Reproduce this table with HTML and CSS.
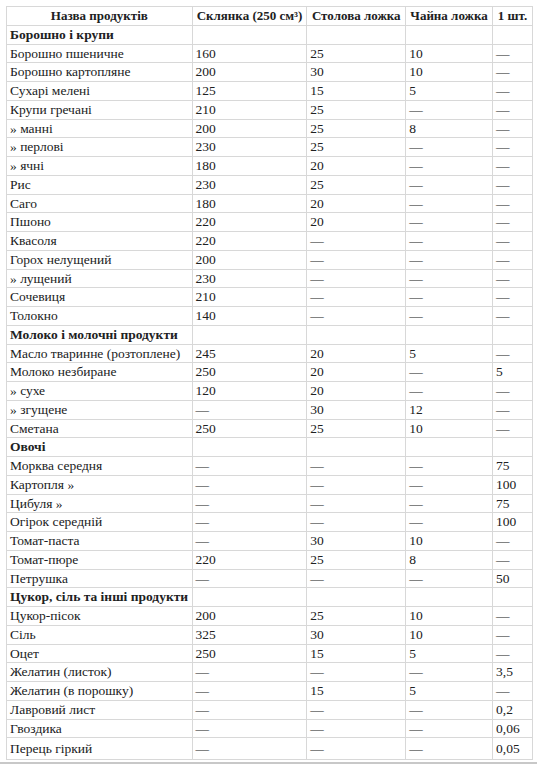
FILE: index.html
```html
<!DOCTYPE html>
<html lang="uk">
<head>
  <meta charset="UTF-8">
  <meta name="viewport" content="width=device-width, initial-scale=1.0">
  <title>Маса продуктів</title>
  <link rel="stylesheet" href="styles.css">
</head>
<body>
  <div class="page">
    <table class="measures">
      <colgroup>
        <col class="col-name">
        <col class="col-glass">
        <col class="col-spoon">
        <col class="col-tea">
        <col class="col-piece">
      </colgroup>
      <thead>
        <tr>
          <th>Назва продуктів</th>
          <th>Склянка (250 см³)</th>
          <th>Столова ложка</th>
          <th>Чайна ложка</th>
          <th>1 шт.</th>
        </tr>
      </thead>
      <tbody>
        <tr class="section"><td>Борошно і крупи</td><td></td><td></td><td></td><td></td></tr>
        <tr><td>Борошно пшеничне</td><td>160</td><td>25</td><td>10</td><td>—</td></tr>
        <tr><td>Борошно картопляне</td><td>200</td><td>30</td><td>10</td><td>—</td></tr>
        <tr><td>Сухарі мелені</td><td>125</td><td>15</td><td>5</td><td>—</td></tr>
        <tr><td>Крупи гречані</td><td>210</td><td>25</td><td>—</td><td>—</td></tr>
        <tr><td>» манні</td><td>200</td><td>25</td><td>8</td><td>—</td></tr>
        <tr><td>» перлові</td><td>230</td><td>25</td><td>—</td><td>—</td></tr>
        <tr><td>» ячні</td><td>180</td><td>20</td><td>—</td><td>—</td></tr>
        <tr><td>Рис</td><td>230</td><td>25</td><td>—</td><td>—</td></tr>
        <tr><td>Саго</td><td>180</td><td>20</td><td>—</td><td>—</td></tr>
        <tr><td>Пшоно</td><td>220</td><td>20</td><td>—</td><td>—</td></tr>
        <tr><td>Квасоля</td><td>220</td><td>—</td><td>—</td><td>—</td></tr>
        <tr><td>Горох нелущений</td><td>200</td><td>—</td><td>—</td><td>—</td></tr>
        <tr><td>» лущений</td><td>230</td><td>—</td><td>—</td><td>—</td></tr>
        <tr><td>Сочевиця</td><td>210</td><td>—</td><td>—</td><td>—</td></tr>
        <tr><td>Толокно</td><td>140</td><td>—</td><td>—</td><td>—</td></tr>

        <tr class="section"><td>Молоко і молочні продукти</td><td></td><td></td><td></td><td></td></tr>
        <tr><td>Масло тваринне (розтоплене)</td><td>245</td><td>20</td><td>5</td><td>—</td></tr>
        <tr><td>Молоко незбиране</td><td>250</td><td>20</td><td>—</td><td>5</td></tr>
        <tr><td>» сухе</td><td>120</td><td>20</td><td>—</td><td>—</td></tr>
        <tr><td>» згущене</td><td>—</td><td>30</td><td>12</td><td>—</td></tr>
        <tr><td>Сметана</td><td>250</td><td>25</td><td>10</td><td>—</td></tr>

        <tr class="section"><td>Овочі</td><td></td><td></td><td></td><td></td></tr>
        <tr><td>Морква середня</td><td>—</td><td>—</td><td>—</td><td>75</td></tr>
        <tr><td>Картопля »</td><td>—</td><td>—</td><td>—</td><td>100</td></tr>
        <tr><td>Цибуля »</td><td>—</td><td>—</td><td>—</td><td>75</td></tr>
        <tr><td>Огірок середній</td><td>—</td><td>—</td><td>—</td><td>100</td></tr>
        <tr><td>Томат-паста</td><td>—</td><td>30</td><td>10</td><td>—</td></tr>
        <tr><td>Томат-пюре</td><td>220</td><td>25</td><td>8</td><td>—</td></tr>
        <tr><td>Петрушка</td><td>—</td><td>—</td><td>—</td><td>50</td></tr>

        <tr class="section"><td>Цукор, сіль та інші продукти</td><td></td><td></td><td></td><td></td></tr>
        <tr><td>Цукор-пісок</td><td>200</td><td>25</td><td>10</td><td>—</td></tr>
        <tr><td>Сіль</td><td>325</td><td>30</td><td>10</td><td>—</td></tr>
        <tr><td>Оцет</td><td>250</td><td>15</td><td>5</td><td>—</td></tr>
        <tr><td>Желатин (листок)</td><td>—</td><td>—</td><td>—</td><td>3,5</td></tr>
        <tr><td>Желатин (в порошку)</td><td>—</td><td>15</td><td>5</td><td>—</td></tr>
        <tr><td>Лавровий лист</td><td>—</td><td>—</td><td>—</td><td>0,2</td></tr>
        <tr><td>Гвоздика</td><td>—</td><td>—</td><td>—</td><td>0,06</td></tr>
        <tr class="last"><td>Перець гіркий</td><td>—</td><td>—</td><td>—</td><td>0,05</td></tr>
      </tbody>
    </table>
  </div>
</body>
</html>
```

FILE: styles.css
```css
/* General Styling */
body {
  margin: 0;
  padding: 0;
  background-color: #fff;
  font-family: "Liberation Serif", "DejaVu Serif", serif;
  color: #202122;
}

.page {
  padding: 6px 4px 2px 6px;
  border-bottom: 2px solid #c8c8c8;
}

/* Table */
.measures {
  width: 527px;
  border-collapse: collapse;
  font-size: 13.5px;
  line-height: 15.75px;
}

.measures th,
.measures td {
  border: 1px solid #d8d8d8;
  padding: 1px 3px;
  text-align: left;
  vertical-align: middle;
}

.measures th {
  text-align: center;
  font-size: 13px;
  font-weight: bold;
  padding: 1px 2px;
}

.measures .section td {
  font-weight: bold;
}

.measures .last td {
  padding: 3px 3px 2px;
}

.col-name {
  width: 186px;
}

.col-glass {
  width: 115px;
}

.col-spoon {
  width: 99px;
}

.col-tea {
  width: 87px;
}

.col-piece {
  width: 40px;
}
```
